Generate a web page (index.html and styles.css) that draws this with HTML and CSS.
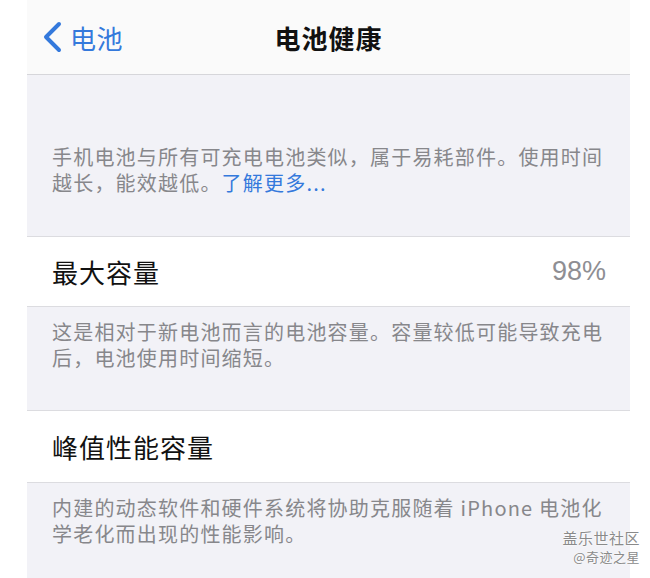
FILE: index.html
```html
<!DOCTYPE html>
<html lang="zh-CN">
<head>
    <meta charset="UTF-8">
    <meta name="viewport" content="width=device-width, initial-scale=1.0">
    <title>电池健康</title>
    <link rel="stylesheet" href="styles.css">
</head>
<body>
    <div class="screen">
        <div class="nav">
            <a class="back" href="#">
                <svg class="chevron" width="20" height="32" viewBox="0 0 20 32">
                    <path d="M17 3 L4 16 L17 29" fill="none" stroke="currentColor" stroke-width="4" stroke-linecap="round" stroke-linejoin="round"/>
                </svg>
                <span>电池</span>
            </a>
            <div class="title">电池健康</div>
            <div></div>
        </div>

        <div class="footer intro">
            <span>手机电池与所有可充电电池类似，属于易耗部件。使用时间越长，能效越低。</span><a class="link" href="#">了解更多...</a>
        </div>

        <div class="row">
            <span class="label">最大容量</span>
            <span class="value">98%</span>
        </div>
        <div class="footer">
            这是相对于新电池而言的电池容量。容量较低可能导致充电后，电池使用时间缩短。
        </div>

        <div class="row">
            <span class="label">峰值性能容量</span>
        </div>
        <div class="footer last">
            内建的动态软件和硬件系统将协助克服随着 iPhone 电池化学老化而出现的性能影响。
        </div>
    </div>

    <div class="mark">
        <div class="mark-big">盖乐世社区</div>
        <div class="mark-small">@奇迹之星</div>
    </div>
</body>
</html>
```

FILE: styles.css
```css
body {
    position: relative;
    margin: 0;
    height: 578px;
    overflow: hidden;
    background-color: #fff;
    font-family: "Noto Sans CJK SC", "Noto Sans", sans-serif;
}
.screen {
    margin-left: 27px;
    width: 603px;
    height: 578px;
    overflow: hidden;
    background-color: #f2f2f7;
}
.nav {
    height: 74px;
    display: grid;
    grid-template-columns: 1fr auto 1fr;
    align-items: center;
    background-color: #fafafa;
    border-bottom: 1px solid #d6d6da;
}
.back {
    display: flex;
    align-items: center;
    gap: 8px;
    padding-left: 15px;
    color: #3479dc;
    text-decoration: none;
    font-size: 26px;
    letter-spacing: 0.5px;
}
.chevron {
    display: block;
}
.title {
    font-size: 26px;
    font-weight: 700;
    letter-spacing: 1px;
    color: #111;
}
.footer {
    padding: 12px 25px 39px 25px;
    font-size: 20px;
    line-height: 26px;
    letter-spacing: 1.2px;
    color: #87878b;
}
.intro {
    padding-top: 69px;
    padding-bottom: 40px;
}
.link {
    color: #3479dc;
    text-decoration: none;
}
.row {
    height: 69px;
    display: flex;
    align-items: center;
    justify-content: space-between;
    padding: 0 24px 0 25px;
    background-color: #fff;
    border-top: 1px solid #dcdce0;
    border-bottom: 1px solid #dcdce0;
}
.row + .footer + .row {
    height: 71px;
}
.label {
    font-size: 26px;
    letter-spacing: 1px;
    color: #111;
}
.value {
    font-family: "Liberation Sans", Arial, sans-serif;
    font-size: 27px;
    color: #8e8e93;
}
.mark {
    position: absolute;
    right: 10px;
    bottom: 12px;
    text-align: right;
    color: #8a8a8a;
    text-shadow: 0 0 2px #fff, 0 0 2px #fff;
}
.mark-big {
    font-size: 15px;
    line-height: 20px;
    letter-spacing: 0.5px;
}
.mark-small {
    font-size: 13px;
    line-height: 18px;
    letter-spacing: 0.5px;
}
```
